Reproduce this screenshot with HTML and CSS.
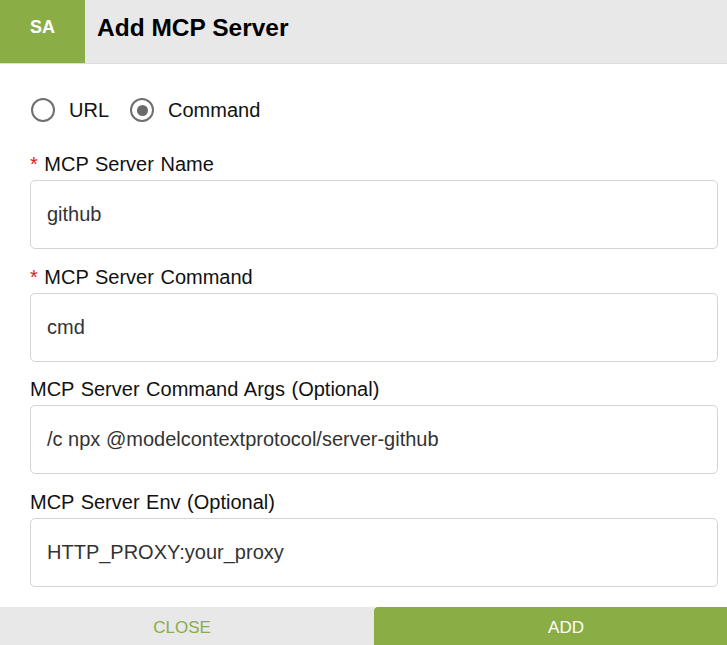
FILE: index.html
```html
<!DOCTYPE html>
<html>
<head>
<meta charset="utf-8">
<link rel="stylesheet" href="styles.css">
</head>
<body>
<div class="page">
  <header class="header">
    <div class="avatar">SA</div>
    <h1 class="title">Add MCP Server</h1>
  </header>
  <main class="form">
    <div class="radios">
      <label class="radio"><span class="circle"></span><span class="rlabel">URL</span></label>
      <label class="radio"><span class="circle checked"></span><span class="rlabel">Command</span></label>
    </div>
    <div class="field">
      <div class="label"><span class="req">*</span> MCP Server Name</div>
      <div class="input">github</div>
    </div>
    <div class="field">
      <div class="label"><span class="req">*</span> MCP Server Command</div>
      <div class="input">cmd</div>
    </div>
    <div class="field">
      <div class="label">MCP Server Command Args (Optional)</div>
      <div class="input">/c npx @modelcontextprotocol/server-github</div>
    </div>
    <div class="field">
      <div class="label">MCP Server Env (Optional)</div>
      <div class="input">HTTP_PROXY:your_proxy</div>
    </div>
  </main>
  <footer class="footer">
    <button class="btn close">CLOSE</button>
    <button class="btn add">ADD</button>
  </footer>
</div>
</body>
</html>
```
FILE: styles.css
```css
html, body {
  margin: 0;
  padding: 0;
  background: #fff;
}
body {
  font-family: "Liberation Sans", Arial, sans-serif;
  color: #222;
}
.page {
  height: 645px;
  display: flex;
  flex-direction: column;
}
.header {
  height: 64px;
  display: flex;
  align-items: stretch;
  background: #e8e8e8;
  border-bottom: 1px solid #dcdcdc;
  box-sizing: border-box;
}
.avatar {
  width: 85px;
  background: #8bad45;
  color: #fff;
  font-weight: bold;
  font-size: 18px;
  display: flex;
  align-items: center;
  justify-content: center;
  padding-bottom: 8px;
  box-sizing: border-box;
}
.title {
  margin: 0;
  padding-left: 12px;
  font-size: 24.5px;
  font-weight: bold;
  color: #000;
  display: flex;
  align-items: center;
  padding-bottom: 8px;
}
.form {
  padding: 31px 9px 0 30px;
  display: flex;
  flex-direction: column;
}
.radios {
  display: flex;
  align-items: center;
  height: 30px;
  margin-bottom: 27px;
}
.radio {
  display: flex;
  align-items: center;
  margin-right: 20px;
}
.circle {
  width: 20px;
  height: 20px;
  border: 2.5px solid #6f6f6f;
  border-radius: 50%;
  display: flex;
  align-items: center;
  justify-content: center;
  margin-left: 1px;
}
.circle.checked::after {
  content: "";
  width: 11px;
  height: 11px;
  border-radius: 50%;
  background: #6a6a6a;
}
.rlabel {
  font-size: 20px;
  margin-left: 14px;
  color: #111;
}
.field {
  display: flex;
  flex-direction: column;
  gap: 4px;
  margin-bottom: 15.5px;
}
.label {
  font-size: 20px;
  line-height: 24px;
  color: #111;
  word-spacing: 1px;
}
.req {
  color: #e02020;
}
.input {
  height: 69px;
  box-sizing: border-box;
  border: 1px solid #d4d4d4;
  border-radius: 5px;
  padding-left: 16px;
  display: flex;
  align-items: center;
  font-size: 20px;
  color: #333;
}
.footer {
  margin-top: auto;
  height: 38px;
  display: flex;
}
.btn {
  border: none;
  font-family: "Liberation Sans", Arial, sans-serif;
  font-size: 17px;
  padding: 4px 0 0 0;
  margin: 0;
}
.close {
  width: 374px;
  background: #e8e8e8;
  color: #8bad45;
  padding-right: 10px;
}
.add {
  flex: 1;
  background: #8bad45;
  color: #fff;
  border-top-left-radius: 4px;
  padding-left: 31px;
}
```
